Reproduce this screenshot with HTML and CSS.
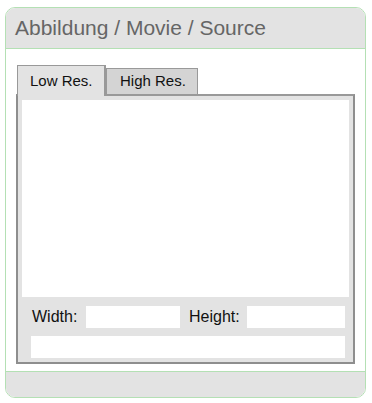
FILE: index.html
```html
<!DOCTYPE html>
<html lang="de">
<head>
  <meta charset="utf-8">
  <title>Abbildung</title>
  <link rel="stylesheet" href="styles.css">
</head>
<body>
  <div class="panel">
    <div class="panel-header">Abbildung / Movie / Source</div>

    <div class="panel-body">
      <div class="tabs">
        <div class="tab active">Low Res.</div>
        <div class="tab">High Res.</div>
      </div>

      <div class="tab-box">
        <div class="preview"></div>

        <div class="size-row">
          <label for="width" class="label-width">Width:</label>
          <input type="text" id="width" class="field field-width">
          <label for="height" class="label-height">Height:</label>
          <input type="text" id="height" class="field field-height">
        </div>

        <div class="source-row">
          <input type="text" class="field field-source">
        </div>
      </div>
    </div>

    <div class="panel-footer"></div>
  </div>
</body>
</html>
```

FILE: styles.css
```css
* {
  box-sizing: border-box;
  margin: 0;
  padding: 0;
}

body {
  background: white;
  font-family: 'Liberation Sans', Arial, sans-serif;
}

.panel {
  margin: 7px 0 0 5px;
  width: 361px;
  border: 1px solid #b4e0b4;
  border-radius: 10px;
  overflow: hidden;
  background: white;
}

.panel-header {
  height: 41px;
  padding: 8px 0 0 9px;
  background: #e3e3e3;
  border-bottom: 1px solid #b4e0b4;
  color: #666;
  font-size: 21px;
}

.panel-body {
  padding: 16px 10px 7px 10px;
}

/* Tabs */
.tabs {
  display: flex;
  height: 29px;
  padding-left: 1px;
}

.tab {
  margin-top: 3px;
  height: 26px;
  width: 92px;
  padding: 3px 0 0 13px;
  background: #d4d4d4;
  border: 1px solid #999;
  border-bottom: none;
  font-size: 15px;
  color: #111;
}

.tab.active {
  margin-top: 0;
  height: 31px;
  padding: 6px 0 0 12px;
  background: #e3e3e3;
  border-right: 2px solid #999;
  position: relative;
  z-index: 1;
  width: 89px;
}

.tab-box {
  height: 270px;
  border: 2px solid #8e8e8e;
  border-top-color: #999;
  padding: 4px;
  background: #e3e3e3;
}

.preview {
  height: 197px;
  background: white;
}

.size-row {
  display: flex;
  align-items: center;
  margin-top: 9px;
  padding-left: 10px;
  height: 22px;
  font-size: 16px;
  color: #111;
}

.label-width {
  width: 46px;
}

.field {
  height: 22px;
  border: none;
  background: white;
  outline: none;
}

.field-width {
  width: 94px;
  margin-left: 8px;
}

.label-height {
  width: 52px;
  margin-left: 9px;
}

.field-height {
  width: 98px;
  margin-left: 6px;
}

.source-row {
  margin-top: 8px;
  padding-left: 9px;
}

.field-source {
  display: block;
  width: 314px;
}

.panel-footer {
  height: 26px;
  background: #e3e3e3;
  border-top: 1px solid #b4e0b4;
}
```
